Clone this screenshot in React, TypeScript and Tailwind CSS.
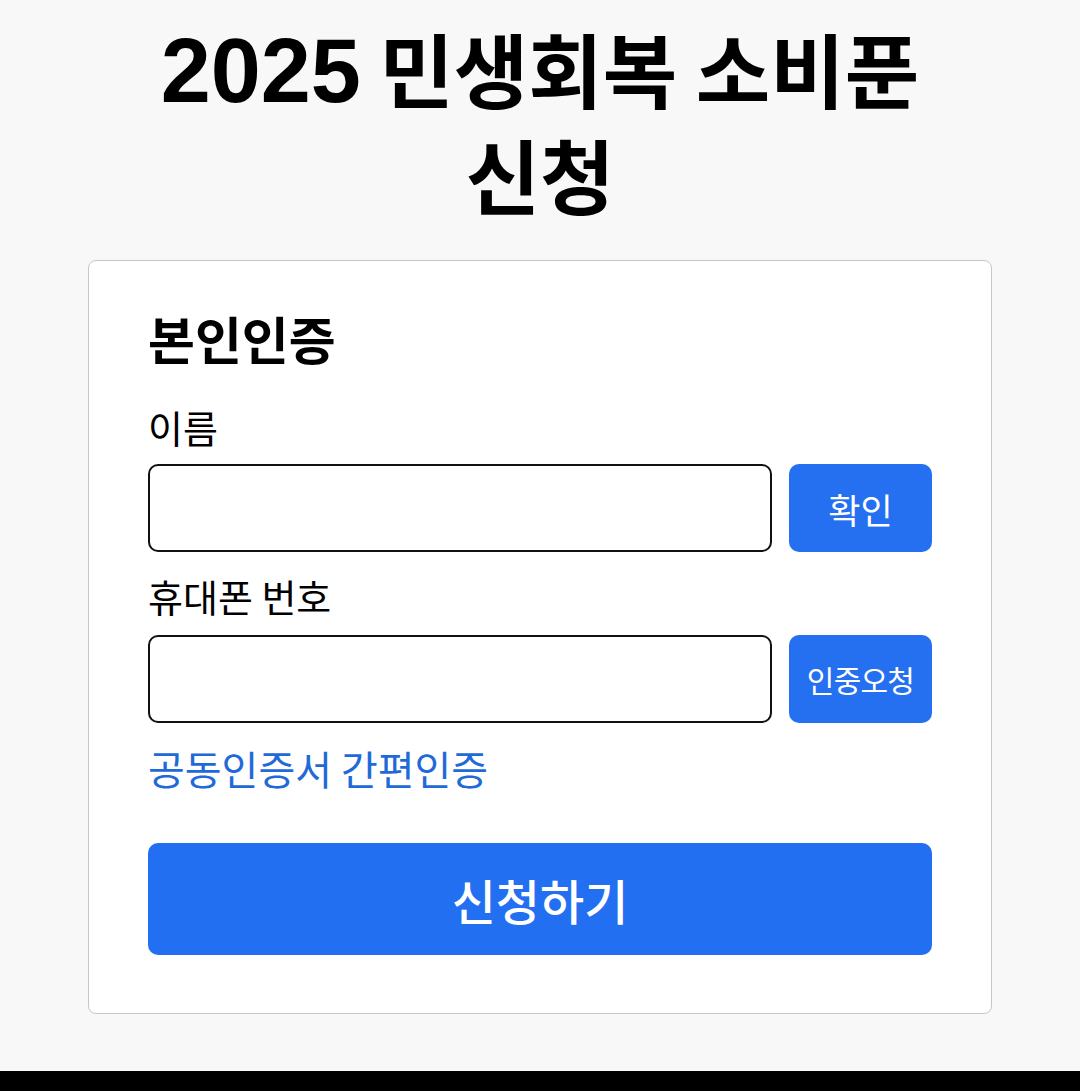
import React from 'react'

const KR = "font-['Noto_Sans_CJK_KR','Noto_Sans',sans-serif]"

export default function App() {
  return (
    <div className={`min-h-[1091px] bg-[#f8f8f8] flex flex-col ${KR}`}>
      <div className="flex-1 flex flex-col items-center">
        {/* 제목 */}
        <h1 className="mt-[16px] text-center text-[81px] leading-[101px] font-bold text-black">
          <span className="font-['Liberation_Sans',sans-serif] text-[90px]">2025</span> 민생회복 소비푼
          <br />
          신청
        </h1>

        {/* 본인인증 카드 */}
        <div className="mt-[37px] w-[904px] bg-white border border-[#c6c6c6] rounded-lg px-[59px] pt-[47px] pb-[58px]">
          <h2 className="text-[51px] leading-[60px] font-bold text-black">본인인증</h2>

          <label className="block mt-[37px] text-[38px] leading-[44px] text-black">이름</label>
          <div className="mt-[15px] flex gap-[17px]">
            <input className="flex-1 h-[88px] border-2 border-[#111111] rounded-[10px] bg-white outline-none px-4 text-[32px]" />
            <button className="w-[143px] h-[88px] rounded-[10px] bg-[#2470f0] text-white text-[35px] leading-none">확인</button>
          </div>

          <label className="block mt-[22px] text-[38px] leading-[44px] text-black">휴대폰 번호</label>
          <div className="mt-[17px] flex gap-[17px]">
            <input className="flex-1 h-[88px] border-2 border-[#111111] rounded-[10px] bg-white outline-none px-4 text-[32px]" />
            <button className="w-[143px] h-[88px] rounded-[10px] bg-[#2470f0] text-white text-[30px] leading-none tracking-tight">인중오청</button>
          </div>

          <a className="block mt-[23px] text-[40px] leading-[44px] text-[#1f6ad8]">공동인증서 간편인증</a>

          <button className="mt-[53px] w-full h-[112px] rounded-[10px] bg-[#236ff2] text-white text-[48px] font-medium leading-none">
            신청하기
          </button>
        </div>
      </div>
      <div className="h-[20px] bg-black" />
    </div>
  )
}
